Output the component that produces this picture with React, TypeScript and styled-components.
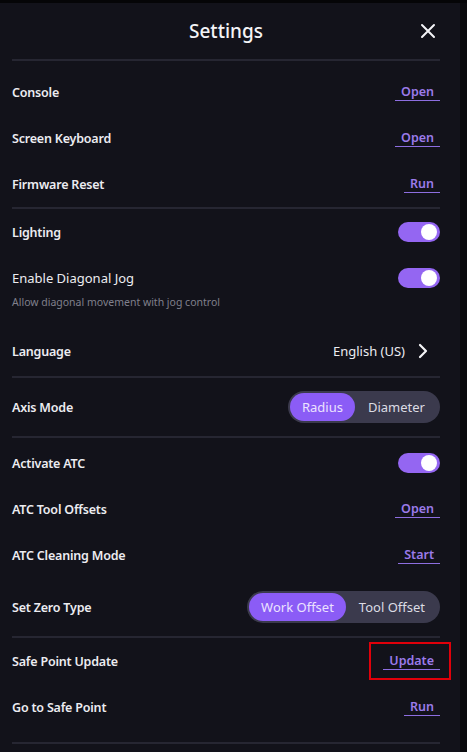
import * as React from 'react'
import styled, { createGlobalStyle } from 'styled-components'

const GlobalStyle = createGlobalStyle`
    html, body {
        margin: 0;
        padding: 0;
        background: #0a0a0d;
    }
    body {
        font-family: "Noto Sans", "Open Sans", sans-serif;
        color: #ececf1;
    }
`

const Page = styled.div`
    width: 467px;
    height: 752px;
    display: flex;
    flex-direction: column;
    overflow: hidden;
`

const TopEdge = styled.div`
    height: 3px;
    background: #050507;
    flex-shrink: 0;
`

const Panel = styled.div`
    width: 460px;
    flex: 1;
    background: #12121a;
    padding: 0 20px 0 12px;
    box-sizing: border-box;
`

const Header = styled.div`
    height: 56px;
    display: flex;
    align-items: center;
    justify-content: center;
    position: relative;
    border-bottom: 2px solid #262632;
`

const Title = styled.h1`
    margin: 0;
    font-size: 19px;
    font-weight: 500;
    color: #f4f4f7;
`

const CloseButton = styled.button`
    position: absolute;
    right: 2px;
    top: 18px;
    width: 20px;
    height: 20px;
    padding: 0;
    border: none;
    background: none;
    display: flex;
    align-items: center;
    justify-content: center;
    color: #f4f4f7;
`

const Section = styled.div<{ $top?: number; $bottom?: number }>`
    padding-top: ${p => p.$top ?? 0}px;
    padding-bottom: ${p => p.$bottom ?? 0}px;
    border-bottom: 2px solid #262632;
`

const Row = styled.div<{ $h?: number }>`
    height: ${p => p.$h ?? 46}px;
    display: flex;
    align-items: center;
    justify-content: space-between;
`

const Label = styled.span<{ $regular?: boolean }>`
    font-size: ${p => (p.$regular ? 13 : 12.5)}px;
    font-weight: ${p => (p.$regular ? 400 : 600)};
    color: #ececf1;
    letter-spacing: ${p => (p.$regular ? '0' : '-0.2px')};
`

const Block = styled.div`
    padding: 13px 0 18px;
`

const BlockHead = styled.div`
    height: 20px;
    display: flex;
    align-items: center;
    justify-content: space-between;
`

const Hint = styled.div`
    margin-top: 6px;
    font-size: 10.5px;
    line-height: 16px;
    color: #80808c;
`

const LinkButton = styled.button`
    position: relative;
    border: none;
    background: none;
    padding: 0 6px 1px;
    margin-top: 2px;
    border-bottom: 1.5px solid #8d6ee0;
    font-family: inherit;
    font-size: 12.5px;
    line-height: 14px;
    font-weight: 600;
    color: #9b7bea;
    cursor: pointer;
`

const Highlight = styled.span`
    position: absolute;
    left: -14px;
    right: -11px;
    top: -12px;
    bottom: -11px;
    border: 2px solid #e0000a;
    pointer-events: none;
`

const Toggle = styled.div<{ $on?: boolean }>`
    width: 42px;
    height: 20px;
    border-radius: 10px;
    background: ${p => (p.$on ? '#9466f2' : '#3d3c4f')};
    display: flex;
    align-items: center;
    justify-content: ${p => (p.$on ? 'flex-end' : 'flex-start')};
    padding: 0 3px;
    box-sizing: border-box;
`

const Knob = styled.span`
    width: 16px;
    height: 16px;
    border-radius: 50%;
    background: #ffffff;
`

const Segmented = styled.div`
    display: flex;
    align-items: center;
    height: 32px;
    padding: 0 2px;
    box-sizing: border-box;
    border-radius: 16px;
    background: #3b3a4d;
`

const Segment = styled.button<{ $active?: boolean }>`
    height: 28px;
    border: none;
    border-radius: 14px;
    padding: 0 ${p => (p.$active ? 12 : 13)}px;
    font-family: inherit;
    font-size: 13px;
    color: ${p => (p.$active ? '#ebe2ff' : '#dcdce4')};
    background: ${p => (p.$active ? '#8b5cf6' : 'transparent')};
`

const Select = styled.div`
    display: flex;
    align-items: center;
    gap: 13px;
    padding-right: 12px;
    font-size: 13px;
    color: #ececf1;
`

const Link = ({ children, marked }: { children: React.ReactNode; marked?: boolean }) => (
    <LinkButton>
        {children}
        {marked && <Highlight />}
    </LinkButton>
)

const Switch = () => (
    <Toggle $on>
        <Knob />
    </Toggle>
)

const App = () => {
    return (
        <Page>
            <GlobalStyle />
            <TopEdge />
            <Panel>
                <Header>
                    <Title>Settings</Title>
                    <CloseButton>
                        <svg width="16" height="16" viewBox="0 0 16 16" fill="none" stroke="currentColor" strokeWidth="2" strokeLinecap="round">
                            <path d="M2 2L14 14M14 2L2 14" />
                        </svg>
                    </CloseButton>
                </Header>
                <Section $top={8}>
                    <Row>
                        <Label>Console</Label>
                        <Link>Open</Link>
                    </Row>
                    <Row>
                        <Label>Screen Keyboard</Label>
                        <Link>Open</Link>
                    </Row>
                    <Row>
                        <Label>Firmware Reset</Label>
                        <Link>Run</Link>
                    </Row>
                </Section>
                <Section $bottom={2}>
                    <Row>
                        <Label>Lighting</Label>
                        <Switch />
                    </Row>
                    <Block>
                        <BlockHead>
                            <Label $regular>Enable Diagonal Jog</Label>
                            <Switch />
                        </BlockHead>
                        <Hint>Allow diagonal movement with jog control</Hint>
                    </Block>
                    <Row>
                        <Label>Language</Label>
                        <Select>
                            English (US)
                            <svg width="10" height="16" viewBox="0 0 10 16" fill="none" stroke="#f4f4f7" strokeWidth="2.2" strokeLinecap="round" strokeLinejoin="round">
                                <path d="M2 2L8 8L2 14" />
                            </svg>
                        </Select>
                    </Row>
                </Section>
                <Section>
                    <Row $h={58}>
                        <Label>Axis Mode</Label>
                        <Segmented>
                            <Segment $active>Radius</Segment>
                            <Segment>Diameter</Segment>
                        </Segmented>
                    </Row>
                </Section>
                <Section $top={2}>
                    <Row>
                        <Label>Activate ATC</Label>
                        <Switch />
                    </Row>
                    <Row>
                        <Label>ATC Tool Offsets</Label>
                        <Link>Open</Link>
                    </Row>
                    <Row>
                        <Label>ATC Cleaning Mode</Label>
                        <Link>Start</Link>
                    </Row>
                    <Row $h={58}>
                        <Label>Set Zero Type</Label>
                        <Segmented>
                            <Segment $active>Work Offset</Segment>
                            <Segment>Tool Offset</Segment>
                        </Segmented>
                    </Row>
                </Section>
                <Section $bottom={12}>
                    <Row>
                        <Label>Safe Point Update</Label>
                        <Link marked>Update</Link>
                    </Row>
                    <Row>
                        <Label>Go to Safe Point</Label>
                        <Link>Run</Link>
                    </Row>
                </Section>
            </Panel>
        </Page>
    )
}

export default App
